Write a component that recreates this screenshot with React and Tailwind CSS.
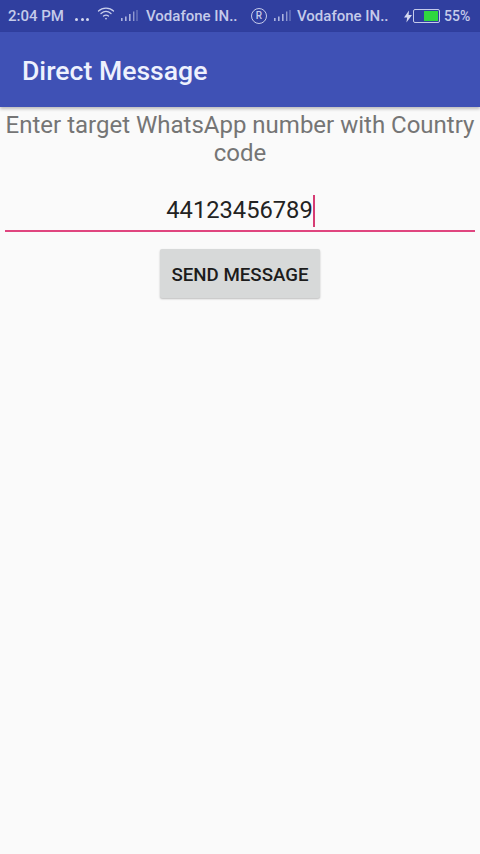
import React from "react";

const font = { fontFamily: "Roboto, 'Liberation Sans', sans-serif" };

function Bars({ className = "" }) {
  return (
    <svg width="18" height="14" viewBox="0 0 18 14" className={className} fill="#b9c0e6">
      <rect x="1" y="9" width="1.6" height="3" opacity="0.9" />
      <rect x="5" y="7.5" width="1.6" height="4.5" opacity="0.9" />
      <rect x="9" y="5" width="1.6" height="7" opacity="0.9" />
      <rect x="13" y="2.5" width="1.4" height="9.5" opacity="0.7" />
      <rect x="16.4" y="1" width="1.2" height="11" opacity="0.5" />
    </svg>
  );
}

function Wifi() {
  return (
    <svg width="18" height="16" viewBox="0 0 18 16" fill="none" stroke="#c9cfec" strokeWidth="1.3" strokeLinecap="round">
      <path d="M1.5 5 C5.5 1.2 12.5 1.2 16.5 5" />
      <path d="M4 7.6 C7 5 11 5 14 7.6" />
      <path d="M6.5 10 C8 8.9 10 8.9 11.5 10" />
      <circle cx="9" cy="12.6" r="0.9" fill="#c9cfec" stroke="none" />
    </svg>
  );
}

function Dots() {
  return (
    <span className="ml-[10px] w-[15px] flex gap-[2.5px] mt-[7px]">
      <span className="w-[3px] h-[3px] rounded-full bg-[#d5d9f0]" />
      <span className="w-[3px] h-[3px] rounded-full bg-[#d5d9f0]" />
      <span className="w-[3px] h-[3px] rounded-full bg-[#d5d9f0]" />
    </span>
  );
}

export default function App() {
  return (
    <div className="w-[480px] h-[854px] bg-[#fafafa] flex flex-col overflow-hidden" style={font}>
      <div className="h-8 bg-[#303f9f] flex items-center text-[#c5cbea] text-[15px] font-medium shrink-0 pl-2 whitespace-nowrap">
        <span className="w-[57px]">2:04 PM</span>
        <Dots />
        <span className="ml-[7px] flex -mt-1"><Wifi /></span>
        <Bars className="ml-[5px]" />
        <span className="ml-[8px] w-[93px]">Vodafone IN..</span>
        <span className="ml-[12px] w-[16px] h-[16px] rounded-full border border-[#c5cbea] flex items-center justify-center text-[10px] leading-none">R</span>
        <Bars className="ml-[6px]" />
        <span className="ml-[6px] w-[93px]">Vodafone IN..</span>
        <svg width="10" height="13" viewBox="0 0 10 13" className="ml-[13px]" fill="#d5d9f0">
          <path d="M6 0.5 L1 7.5 H4.2 L3.4 12.5 L9 5 H5.6 Z" />
        </svg>
        <div className="w-[27px] h-[14px] border border-[#c5cbea] rounded-[2px] flex justify-end p-px">
          <div className="w-[14px] bg-[#2fd63f]" />
        </div>
        <span className="ml-[4px] w-[26px] text-[14px]">55%</span>
      </div>

      <div className="h-[75px] bg-[#3f51b5] flex items-center pl-[22px] pt-[3px] text-[26.6px] font-medium text-[#eef1fd] shrink-0 shadow-[0_2px_3px_rgba(0,0,0,0.25)] relative">
        Direct Message
      </div>

      <div className="flex flex-col items-center px-[5px]">
        <p className="mt-[4px] text-center text-[#757575] text-[24px] leading-[28px] w-full">
          Enter target WhatsApp number with Country code
        </p>
        <div className="w-full mt-[18px] h-[47px] border-b-2 border-[#e0457f] flex items-center justify-center text-[23.7px] text-[#222222] pt-[6px] pl-[1px]">
          <span>44123456789</span>
          <span className="w-[2px] h-[32px] bg-[#d63c74]" />
        </div>
        <button className="mt-[17px] w-[160px] h-[49px] pt-[3px] bg-[#d7d9d9] rounded-[2px] text-[18.7px] font-medium text-[#1c1c1c] shadow-[0_1px_2px_rgba(0,0,0,0.25)]">
          SEND MESSAGE
        </button>
      </div>
    </div>
  );
}
